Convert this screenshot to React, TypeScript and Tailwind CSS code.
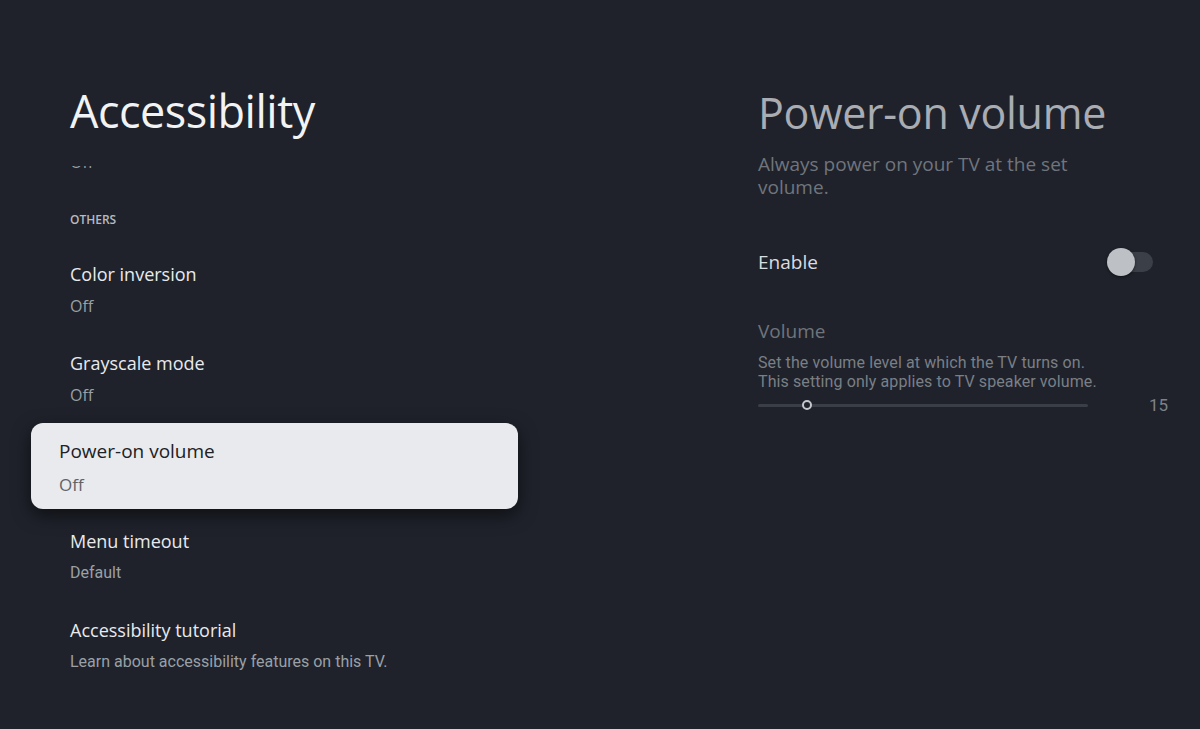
const sans = "font-['Open_Sans',_'Noto_Sans',_sans-serif]"
const roboto = "font-['Roboto',_sans-serif]"

type Item = { title: string; sub: string; subFont?: string }

const items: Item[] = [
  { title: 'Color inversion', sub: 'Off' },
  { title: 'Grayscale mode', sub: 'Off' },
]

const after: Item[] = [
  { title: 'Menu timeout', sub: 'Default', subFont: roboto },
  { title: 'Accessibility tutorial', sub: 'Learn about accessibility features on this TV.', subFont: roboto },
]

function Row({ item, first }: { item: Item; first?: boolean }) {
  return (
    <div className={`px-[70px] ${first ? '' : 'mt-[33px]'}`}>
      <p className={`${sans} text-[18px] leading-6 text-[#e8eaed]`}>{item.title}</p>
      <p className={`${item.subFont ?? sans} mt-2 text-[16px] leading-6 text-[#9aa0a6]`}>{item.sub}</p>
    </div>
  )
}

export default function App() {
  return (
    <div className="w-[1200px] h-[729px] bg-[#1f222b] overflow-hidden flex">
      {/* Settings list */}
      <div className="w-[620px] flex flex-col shrink-0">
        <h1 className={`${sans} pl-[70px] pt-[83px] text-[45px] leading-[56px] text-[#f1f3f4] tracking-[-0.5px]`}>
          Accessibility
        </h1>
        <div className="flex-1 overflow-hidden mt-[27px]">
          <p className={`${sans} px-[70px] -mt-4 text-[16px] leading-6 text-[#9aa0a6]`}>Off</p>
          <p className={`${sans} px-[70px] mt-[38px] text-[12px] leading-4 font-semibold uppercase text-[#b6bac0]`}>
            Others
          </p>
          <div className="mt-[34px]">
            {items.map((it, i) => <Row key={it.title} item={it} first={i === 0} />)}
          </div>
          <div className="ml-[31px] mt-4 w-[487px] h-[86px] rounded-xl bg-[#e8eaed] pl-[28px] pt-4 shadow-[0_6px_18px_rgba(0,0,0,0.55)]">
            <p className={`${sans} text-[19px] leading-6 text-[#202124]`}>Power-on volume</p>
            <p className={`${sans} mt-[10px] text-[17px] leading-6 text-[#5f6368]`}>Off</p>
          </div>
          <div className="mt-5">
            {after.map((it, i) => <Row key={it.title} item={it} first={i === 0} />)}
          </div>
        </div>
      </div>

      {/* Detail panel */}
      <div className="flex-1 pl-[138px] pr-[32px] pt-[85px]">
        <h2 className={`${sans} text-[43px] leading-[56px] text-[#a9acb2] tracking-[-0.3px]`}>Power-on volume</h2>
        <p className={`${sans} mt-[12px] w-[330px] text-[19px] leading-[23px] text-[#70757d]`}>
          Always power on your TV at the set volume.
        </p>
        <div className="mt-[49px] flex items-center justify-between">
          <span className={`${sans} text-[19px] leading-6 text-[#dadce0]`}>Enable</span>
          <div className="relative w-[46px] h-[28px] mr-[15px] flex items-center">
            <div className="ml-[8px] w-[38px] h-[20px] rounded-full bg-[#3b3f48]" />
            <div className="absolute left-0 top-0 w-[28px] h-[28px] rounded-full bg-[#bdc1c6] shadow-[0_1px_3px_rgba(0,0,0,0.5)]" />
          </div>
        </div>
        <p className={`${sans} mt-[43px] text-[19px] leading-6 text-[#6f747b]`}>Volume</p>
        <p className={`${roboto} mt-[10px] text-[16px] leading-[19px] tracking-[0.1px] text-[#7a7f86]`}>
          Set the volume level at which the TV turns on.
          <br />
          This setting only applies to TV speaker volume.
        </p>
        <div className="mt-[2px] flex items-center">
          <div className="relative w-[330px] h-[14px] flex items-center">
            <div className="w-full h-[3px] rounded-full bg-[#3a3e47]" />
            <div className="absolute left-[44px] top-[2px] w-[10px] h-[10px] rounded-full border-[2.5px] border-[#c4c7cc] bg-[#1f222b]" />
          </div>
          <span className={`${roboto} ml-auto text-[17px] leading-6 text-[#7d8189]`}>15</span>
        </div>
      </div>
    </div>
  )
}
